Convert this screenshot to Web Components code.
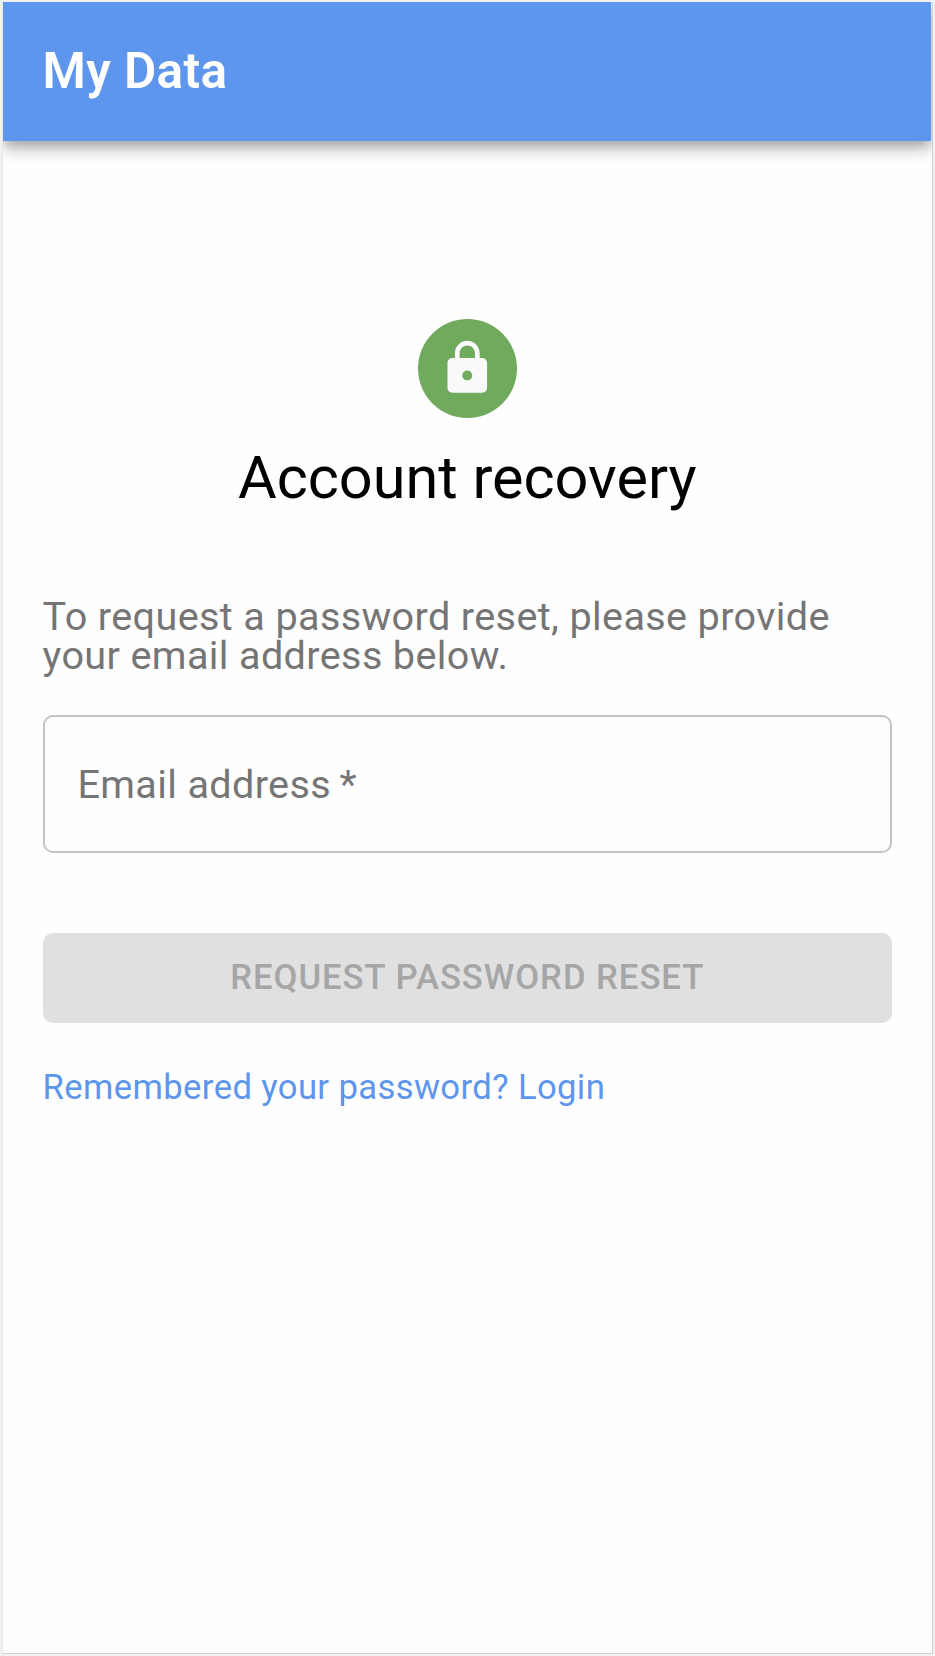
<!DOCTYPE html>
<html lang="en">
<head>
<meta charset="utf-8">
<title>My Data</title>
<style>
html, body { margin: 0; height: 100%; }
body { background: #f0f1f1; font-family: Roboto, sans-serif; overflow: hidden; }
</style>
</head>
<body>
<app-shell>
  <app-bar slot="bar">My Data</app-bar>
  <lock-avatar></lock-avatar>
  <page-heading>Account recovery</page-heading>
  <help-text>To request a password reset, please provide your email address below.</help-text>
  <text-field>Email address<span>&thinsp;*</span></text-field>
  <submit-button>Request password reset</submit-button>
  <text-link>Remembered your password? Login</text-link>
</app-shell>
<script>
const define = (name, css, html) => customElements.define(name, class extends HTMLElement {
  constructor() {
    super();
    this.attachShadow({ mode: 'open' }).innerHTML = `<style>${css}</style>${html}`;
  }
});

define('app-shell', `
  :host { display: block; box-sizing: border-box; height: 1656px; padding: 2px 2px 2px 3px; }
  .screen { box-sizing: border-box; height: 1652px; background: #fefefe; overflow: hidden;
    border-right: 1px solid #d0d0d0; border-bottom: 1px solid #cfcfcf; display: flex; flex-direction: column; }
  .bar { margin-right: 1px; }
  .frame { box-shadow: -1px 0 #e6e9e9; }
  main { display: flex; flex-direction: column; padding: 178.7px 40px 0 39.6px; }
`, `<div class="frame"><div class="screen"><div class="bar"><slot name="bar"></slot></div><main><slot></slot></main></div></div>`);

define('app-bar', `
  :host { display: block; }
  header { box-sizing: border-box; height: 138.6px; padding: 0 39.6px; display: flex; align-items: center;
    background: #5e95ed; color: #fff;
    box-shadow: 0 5px 10px -2.5px rgba(0,0,0,.2), 0 10px 12.4px 0 rgba(0,0,0,.14), 0 2.5px 24.8px 0 rgba(0,0,0,.12); }
  h6 { margin: 0; font-size: 49.5px; font-weight: 600; line-height: 79.2px; letter-spacing: .0075em; }
`, `<header><h6><slot></slot></h6></header>`);

define('lock-avatar', `
  :host { display: flex; align-self: center; align-items: center; justify-content: center;
    width: 99px; height: 99px; border-radius: 50%; background: #70aa5c; color: #fafafa; }
  svg { display: block; width: 59.4px; height: 59.4px; transform: translate(-.4px, -.7px); fill: currentColor; }
`, `<svg viewBox="0 0 24 24"><path d="M18 8h-1V6c0-2.76-2.24-5-5-5S7 3.24 7 6v2H6c-1.100 0-2 .9-2 2v10c0 1.100.9 2 2 2h12c1.100 0 2-.9 2-2V10c0-1.100-.9-2-2-2zm-6 9c-1.100 0-2-.9-2-2s.9-2 2-2 2 .9 2 2-.9 2-2 2zm3.100-9H8.900V6c0-1.710 1.390-3.100 3.100-3.100 1.710 0 3.100 1.390 3.100 3.100v2z"/></svg>`);

define('page-heading', `
  :host { display: block; margin-top: 20.8px; text-align: center; color: #000; }
  h1 { margin: 0; font-size: 59.4px; font-weight: 400; line-height: 79.2px; }
`, `<h1><slot></slot></h1>`);

define('help-text', `
  :host { display: block; margin-top: 78.4px; color: #757575; }
  p { margin: 0; font-size: 39.6px; line-height: 39.6px; letter-spacing: .00938em; }
`, `<p><slot></slot></p>`);

define('text-field', `
  :host { display: block; margin-top: 39px; color: #757575; }
  label { box-sizing: border-box; display: flex; align-items: center; height: 138px; padding: 1px 32.8px 0;
    border: 2px solid #c4c4c4; border-radius: 10px; font-size: 39.6px; line-height: 39.6px; letter-spacing: .00938em; }
`, `<label><slot></slot></label>`);

define('submit-button', `
  :host { display: block; margin-top: 80px; }
  button { display: block; box-sizing: border-box; width: 100%; height: 90px; margin: 0; padding: 0 0 2px; border: 0; border-radius: 10px;
    background: #e0e0e0; color: #a6a6a6; font: 500 34.65px/60px Roboto, sans-serif;
    letter-spacing: .0283em; text-transform: uppercase; }
`, `<button disabled><slot></slot></button>`);

define('text-link', `
  :host { display: block; margin-top: 40.1px; color: #5e95ed; }
  a { display: block; font-size: 34.65px; line-height: 49.5px; letter-spacing: .01071em; }
`, `<a><slot></slot></a>`);
</script>
</body>
</html>
